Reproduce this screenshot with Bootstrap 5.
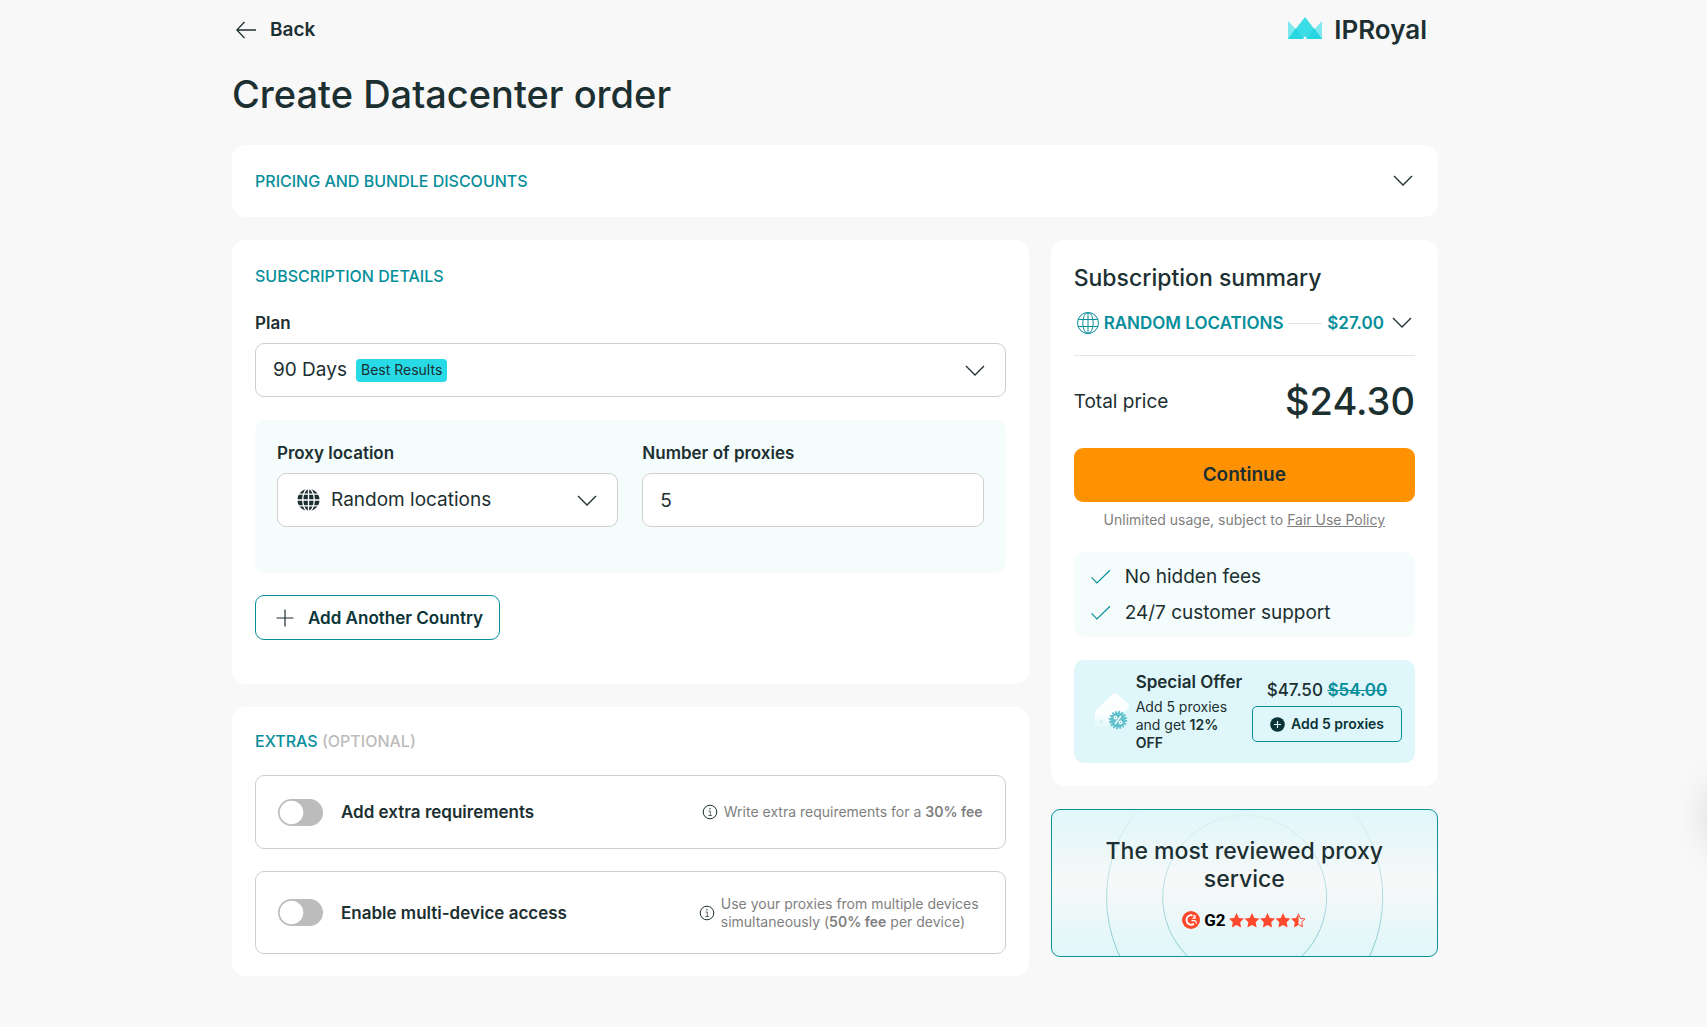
<!DOCTYPE html>
<html lang="en">
<head>
<meta charset="utf-8">
<meta name="viewport" content="width=device-width, initial-scale=1">
<title>Create Datacenter order - IPRoyal</title>
<link href="https://cdn.jsdelivr.net/npm/bootstrap@5.3.0/dist/css/bootstrap.min.css" rel="stylesheet">
<style>
  :root { --ink:#1c2f31; --teal:#068e9b; --line:#cfcfcf; --muted:#7f7f7f; }
  body { background:#f8f8f8; color:var(--ink); font-family:Inter,"Noto Sans",sans-serif; font-size:17px; line-height:20px; padding-right:37px; }
  svg { flex:none; display:block; }
  .page { max-width:1206px; }
  .back-link { font-size:19px; line-height:28px; font-weight:600; color:var(--ink); gap:14px; margin-top:8px; }
  .brand { font-size:26px; line-height:34px; font-weight:600; color:var(--ink); gap:12px; margin-right:11px; margin-top:4px; }
  h1 { font-size:38px; line-height:48px; font-weight:500; margin:22px 0 27px; }
  .panel { background:#fff; border-radius:14px; padding:23px; }
  .section-title { font-size:16px; line-height:24px; font-weight:500; color:var(--teal); text-transform:uppercase; margin:0; }
  .details .section-title { padding-top:1px; margin-bottom:25px; }
  .extras { padding-top:22px; padding-bottom:22px; }
  .optional { color:#bcbcbc; }
  .pricing-toggle { background:none; border:0; padding:0 2px 0 0; height:26px; text-align:left; }
  .layout { --bs-gutter-x:22px; margin-top:23px; }
  .stack { display:flex; flex-direction:column; gap:23px; }
  .field-label { line-height:20px; font-weight:600; margin-bottom:10px; display:block; }
  .field { position:relative; }
  .field-box { width:100%; height:54px; border:1px solid var(--line); border-radius:9px; background:#fff; color:var(--ink); font-size:19px; padding:0 17px; appearance:none; }
  .field-chevron { position:absolute; right:21px; top:22px; pointer-events:none; }
  .field-icon { position:absolute; left:20px; top:15px; pointer-events:none; }
  .field-box.with-icon { padding-left:53px; }
  .plan-tag { position:absolute; left:101px; top:16px; height:23px; border-radius:4px; padding:0 5px; background:#27dae6; font-size:14px; line-height:22px; pointer-events:none; }
  .mint { background:#f5fcfc; border-radius:10px; }
  .location-panel { padding:23px 22px 46px; margin:23px 0 22px; --bs-gutter-x:23px; }
  .add-country { border:1px solid var(--teal); border-radius:9px; background:#fff; color:#0a3438; font-weight:600; height:45px; padding:0 16px 0 20px; gap:14px; margin-bottom:21px; }
  .extra { border:1px solid var(--line); border-radius:9px; padding:0 22px; min-height:74px; gap:18px; margin-top:22px; }
  .extra.tall { min-height:83px; }
  .extra .form-check-input { width:45px; height:27px; margin:0; background-color:#bcbcbc; border:0; float:none; flex:none; background-position:left center;
    background-image:url("data:image/svg+xml,%3csvg xmlns='http://www.w3.org/2000/svg' viewBox='-4 -4 8 8'%3e%3ccircle r='3.5' fill='%23fff'/%3e%3c/svg%3e"); }
  .extra .form-check-input:checked { background-color:var(--teal); background-position:right center; }
  .extra label { font-weight:600; }
  .note { font-size:14px; line-height:18px; color:var(--muted); gap:6px; }
  .note b { font-weight:600; }
  .summary-title { font-size:23px; line-height:30px; font-weight:500; margin:0 0 16px; }
  .summary-row { background:none; border:0; padding:0 3px 0 2px; height:28px; color:var(--teal); font-weight:600; }
  .leader { height:1px; background:#e6e6e6; margin:0 5px; }
  .rule { height:1px; background:#e6e6e6; margin-top:18px; }
  .total-row { height:92px; font-size:19px; }
  .total-price { font-size:38px; font-weight:500; line-height:48px; padding-bottom:2px; }
  .continue-btn { height:54px; border:0; border-radius:9px; background:#ff9203; color:var(--ink); font-size:19px; font-weight:600; }
  .usage { font-size:14px; line-height:20px; color:var(--muted); margin:8px 0 22px; text-align:center; }
  .usage a { color:inherit; text-decoration:underline; }
  .perks { list-style:none; margin:0 0 23px; padding:7px 16px 6px; font-size:19px; line-height:36px; }
  .perks li { display:flex; align-items:center; gap:13px; }
  .offer { background:#dff7fa; border-radius:10px; padding:10px 13px 11px 19px; gap:7px; }
  .offer-title { font-weight:600; line-height:24px; white-space:nowrap; margin-bottom:4px; }
  .offer-text { font-size:14px; line-height:18px; width:100px; }
  .offer-text b { font-weight:600; }
  .offer-price { font-weight:500; }
  .offer-price s { color:var(--teal); font-weight:600; }
  .offer-btn { border:1px solid var(--teal); border-radius:5px; background:none; color:#0a3438; height:36px; width:150px; padding:0; font-size:14px; font-weight:600; gap:6px; margin-top:6px; }
  .review { position:relative; overflow:hidden; border:1px solid #0d919e; border-radius:9px; padding:27px 24px 25px; background:linear-gradient(#e0f7fa,#f7f8f8 50%,#dff7f9); text-align:center; }
  .rings { position:absolute; inset:0; width:100%; height:100%; }
  .review-title { position:relative; font-size:23px; line-height:28px; font-weight:500; max-width:300px; margin:0 auto 16px; }
  .rating { position:relative; gap:4px; font-family:Roboto,sans-serif; font-size:17px; line-height:22px; font-weight:700; color:#000; }
  .chat-dock { position:fixed; right:-66px; top:787px; width:60px; height:60px; border-radius:50%; box-shadow:0 0 40px rgba(0,0,0,.22); }
</style>
<script src="https://cdn.jsdelivr.net/npm/bootstrap@5.3.0/dist/js/bootstrap.bundle.min.js"></script>
</head>
<body>
<svg width="0" height="0" class="position-absolute" aria-hidden="true">
  <symbol id="chev" viewBox="0 0 20 12"><path d="M1 1l9 9 9-9" fill="none" stroke="#1c2f31" stroke-width="1.3"/></symbol>
  <symbol id="info" viewBox="0 0 16 16"><g fill="none" stroke="#1c2f31"><circle cx="8" cy="8" r="6.8"/><path d="M6.500 7h1.800v4.500M6.300 11.500h3.600" stroke-width=".7"/></g><circle cx="8" cy="4.700" r=".7" fill="#1c2f31"/></symbol>
  <symbol id="tick" viewBox="0 0 24 20"><path d="M1.500 10.500l6 6L22 2.500" fill="none" stroke="#068e9b" stroke-width="1.300"/></symbol>
  <symbol id="star" viewBox="0 0 15 15"><path d="M7.500 0l2.300 4.900 5.200.7-3.800 3.700.9 5.300-4.600-2.500-4.600 2.500.9-5.300L0 5.600l5.200-.7z"/></symbol>
</svg>

<main class="page mx-auto">
  <header class="d-flex align-items-center justify-content-between pt-2">
    <a href="#" class="back-link d-flex align-items-center text-decoration-none ps-1 pb-1">
      <svg width="20" height="18" viewBox="0 0 20 18" fill="none" stroke="#1c2f31" stroke-width="1.300"><path d="M20 9H.800M8.500 1L.800 9l7.700 8"/></svg>
      Back
    </a>
    <a href="#" class="brand d-flex align-items-center text-decoration-none">
      <svg class="mb-1" width="34" height="22" viewBox="0 0 34 22"><path d="M0 4l7.500 8L0 22zM34 4l-7.500 8L34 22z" fill="#7de8ee"/><path d="M17 0l17 22H19l-2-3-2 3H0z" fill="#3adde6"/><path d="M0 22l8-11 7 11zM34 22l-8-11-7 11z" fill="#27d6e0"/></svg>
      IPRoyal
    </a>
  </header>

  <h1>Create Datacenter order</h1>

  <section class="panel">
    <button type="button" class="pricing-toggle w-100 d-flex align-items-center justify-content-between" aria-expanded="false">
      <span class="section-title">Pricing and bundle discounts</span>
      <svg width="20" height="12"><use href="#chev"/></svg>
    </button>
  </section>

  <div class="row layout">
    <div class="col-lg-8">
      <div class="stack">
        <section class="panel details">
          <h2 class="section-title">Subscription details</h2>
          <label class="field-label" for="plan">Plan</label>
          <div class="field">
            <select id="plan" class="field-box"><option>90 Days</option></select>
            <span class="plan-tag">Best Results</span>
            <svg class="field-chevron" width="20" height="12"><use href="#chev"/></svg>
          </div>
          <div class="mint location-panel">
            <div class="row">
              <div class="col-6">
                <label class="field-label" for="loc">Proxy location</label>
                <div class="field">
                  <select id="loc" class="field-box with-icon"><option>Random locations</option></select>
                  <svg class="field-icon" width="23" height="24" viewBox="0 0 24 24"><circle cx="12" cy="12" r="11.500" fill="#1c2f31"/><g fill="none" stroke="#fff" stroke-width="1.400"><ellipse cx="12" cy="12" rx="6" ry="11.800"/><path d="M12 0v24M0 12h24M2 5.800h20M2 18.200h20"/></g></svg>
                  <svg class="field-chevron" width="20" height="12"><use href="#chev"/></svg>
                </div>
              </div>
              <div class="col-6">
                <label class="field-label" for="count">Number of proxies</label>
                <input id="count" class="field-box" type="text" inputmode="numeric" value="5">
              </div>
            </div>
          </div>
          <button type="button" class="add-country d-inline-flex align-items-center">
            <svg width="18" height="18" viewBox="0 0 18 18" stroke="#1c2f31" stroke-width="1.200"><path d="M9 .5v17M.5 9h17"/></svg>
            Add Another Country
          </button>
        </section>

        <section class="panel extras">
          <h2 class="section-title">Extras <span class="optional">(optional)</span></h2>
          <div class="extra d-flex align-items-center">
            <input class="form-check-input rounded-pill" type="checkbox" role="switch" id="req">
            <label for="req">Add extra requirements</label>
            <span class="note d-flex align-items-center ms-auto"><svg width="16" height="16"><use href="#info"/></svg><span>Write extra requirements for a <b>30% fee</b></span></span>
          </div>
          <div class="extra tall d-flex align-items-center">
            <input class="form-check-input rounded-pill" type="checkbox" role="switch" id="multi">
            <label for="multi">Enable multi-device access</label>
            <span class="note d-flex align-items-center ms-auto pe-1"><svg width="16" height="16"><use href="#info"/></svg><span>Use your proxies from multiple devices<br>simultaneously (<b>50% fee</b> per device)</span></span>
          </div>
        </section>
      </div>
    </div>

    <div class="col-lg-4">
      <div class="stack">
        <section class="panel">
          <h2 class="summary-title">Subscription summary</h2>
          <button type="button" class="summary-row w-100 d-flex align-items-center" aria-expanded="false">
            <svg class="me-1" width="24" height="24" viewBox="0 0 24 24" fill="none" stroke="#068e9b"><circle cx="12" cy="12" r="10.500"/><ellipse cx="12" cy="12" rx="5.200" ry="10.500"/><path d="M12 1.500v21M2.500 8.500h19M2.500 15.500h19"/></svg>
            <span>RANDOM LOCATIONS</span>
            <span class="leader flex-grow-1"></span>
            <span>$27.00</span>
            <svg class="ms-2" width="20" height="12"><use href="#chev"/></svg>
          </button>
          <div class="rule"></div>
          <div class="total-row d-flex align-items-center justify-content-between">
            <span>Total price</span>
            <span class="total-price">$24.30</span>
          </div>
          <button type="button" class="continue-btn w-100 d-block">Continue</button>
          <p class="usage">Unlimited usage, subject to <a href="#">Fair Use Policy</a></p>
          <ul class="mint perks">
            <li><svg width="22" height="18"><use href="#tick"/></svg>No hidden fees</li>
            <li><svg width="22" height="18"><use href="#tick"/></svg>24/7 customer support</li>
          </ul>
          <div class="offer d-flex align-items-center">
            <svg width="36" height="38" viewBox="0 0 36 38">
              <defs><linearGradient id="tagFill" x1="0" y1="0" x2="0" y2="1"><stop offset="0" stop-color="#fff"/><stop offset=".6" stop-color="#fbfefe"/><stop offset="1" stop-color="#e3f8fa"/></linearGradient></defs>
              <path d="M2 20q0-1 1-2L20 2q2-2 4 0l11 10q2 2 0 4L18 32q-2 3-5 3H4q-2 0-2-2z" fill="url(#tagFill)"/>
              <circle cx="8.500" cy="29.500" r="2" fill="#dcf3f6"/>
              <circle cx="25" cy="28" r="7.600" fill="#62c3ce"/><circle cx="25" cy="28" r="8" fill="none" stroke="#62c3ce" stroke-width="2.400" stroke-dasharray="1.800 1.340"/>
              <g fill="none" stroke="#fff" stroke-width="1.300"><path d="M28 24l-6 8"/><circle cx="22.500" cy="25.600" r="1.300"/><circle cx="27.500" cy="30.400" r="1.300"/></g>
            </svg>
            <div>
              <div class="offer-title">Special Offer</div>
              <div class="offer-text">Add 5 proxies and get <b>12% OFF</b></div>
            </div>
            <div class="ms-auto text-center">
              <div class="offer-price">$47.50 <s>$54.00</s></div>
              <button type="button" class="offer-btn d-flex align-items-center justify-content-center"><svg width="15" height="15" viewBox="0 0 15 15"><circle cx="7.500" cy="7.500" r="7.300" fill="#0a3438"/><path d="M7.500 4v7M4 7.500h7" stroke="#dff7fa" stroke-width="1.200"/></svg>Add 5 proxies</button>
            </div>
          </div>
        </section>

        <section class="review">
          <svg class="rings" viewBox="0 0 387 149" preserveAspectRatio="xMidYMid slice" fill="none">
            <defs><linearGradient id="ringStroke" gradientUnits="userSpaceOnUse" x1="0" y1="0" x2="0" y2="149"><stop offset="0" stop-color="#e0f0ec"/><stop offset=".3" stop-color="#cbe7e8"/><stop offset="1" stop-color="#83c8cf"/></linearGradient></defs>
            <g stroke="url(#ringStroke)"><circle cx="193.500" cy="89" r="82.300"/><circle cx="193.500" cy="89" r="138.700"/></g>
          </svg>
          <h2 class="review-title">The most reviewed proxy service</h2>
          <div class="rating d-flex align-items-center justify-content-center">
            <svg width="18" height="18" viewBox="0 0 18 18"><circle cx="9" cy="9" r="9" fill="#ff492c"/><path d="M10.500 4.300A4.800 4.800 0 1 0 12 12.900" fill="none" stroke="#fff" stroke-width="1.900"/><path d="M9.500 9.600h3.600l1.700 2.900M11.300 5.200q1.700-1.300 2 0 .1.800-1.800 1.900h2.200" fill="none" stroke="#fff" stroke-width="1.100"/></svg>
            <span>G2</span>
            <svg width="77" height="15" viewBox="0 0 77 15" fill="#ff492c"><use href="#star" width="15" height="15"/><use href="#star" x="15.500" width="15" height="15"/><use href="#star" x="31" width="15" height="15"/><use href="#star" x="46.500" width="15" height="15"/><path d="M69.500 0v12.100l-4.600 2.500.9-5.300L62 5.600l5.200-.7z"/><path d="M69.500 1.200l2 4.200 4.500.6-3.300 3.200.8 4.500-4-2.200" fill="none" stroke="#ff492c"/></svg>
          </div>
        </section>
      </div>
    </div>
  </div>
</main>
<div class="chat-dock" aria-hidden="true"></div>
</body>
</html>
